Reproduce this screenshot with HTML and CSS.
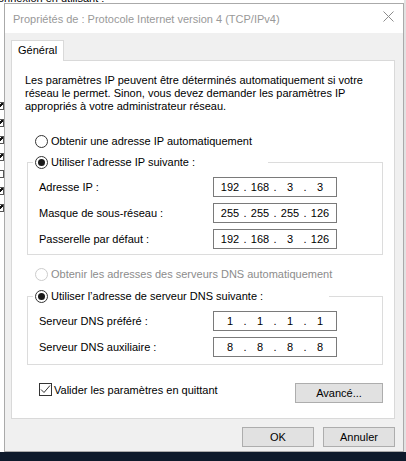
FILE: index.html
```html
<!DOCTYPE html>
<html lang="fr">
<head>
<meta charset="utf-8">
<title>Propriétés IPv4</title>
<link rel="stylesheet" href="styles.css">
</head>
<body>
<div class="desktop">
  <div class="bgwin">
    <div class="bgwin-top">onnexion en utilisant :</div>
    <div class="bgwin-icons">
      <span class="mk"></span><span class="mk"></span><span class="mk"></span><span class="mk"></span><span class="mk empty"></span><span class="mk"></span><span class="mk"></span>
    </div>
  </div>
  <div class="dialog">
    <div class="titlebar">
      <span class="title">Propriétés de : Protocole Internet version 4 (TCP/IPv4)</span>
      <svg class="close" width="11" height="11" viewBox="0 0 11 11"><path d="M0.5 0.5L10.5 10.5M10.5 0.5L0.5 10.5" stroke="#8c8c8c" stroke-width="1" fill="none"/></svg>
    </div>
    <div class="body">
      <div class="tabs"><div class="tab">Général</div></div>
      <div class="panel">
        <p class="intro">Les paramètres IP peuvent être déterminés automatiquement si votre<br>réseau le permet. Sinon, vous devez demander les paramètres IP<br>appropriés à votre administrateur réseau.</p>
        <div class="radio first"><span class="dot"></span><span>Obtenir une adresse IP automatiquement</span></div>
        <div class="group g1">
          <div class="legend l1"><span class="dot on"></span><span>Utiliser l’adresse IP suivante :</span></div>
          <div class="rows">
            <div class="row"><span>Adresse IP :</span><div class="ip"><span>192</span><i>.</i><span>168</span><i>.</i><span>3</span><i>.</i><span>3</span></div></div>
            <div class="row"><span>Masque de sous-réseau :</span><div class="ip"><span>255</span><i>.</i><span>255</span><i>.</i><span>255</span><i>.</i><span>126</span></div></div>
            <div class="row"><span>Passerelle par défaut :</span><div class="ip"><span>192</span><i>.</i><span>168</span><i>.</i><span>3</span><i>.</i><span>126</span></div></div>
          </div>
        </div>
        <div class="radio disabled"><span class="dot"></span><span>Obtenir les adresses des serveurs DNS automatiquement</span></div>
        <div class="group g2">
          <div class="legend l2"><span class="dot on"></span><span>Utiliser l’adresse de serveur DNS suivante :</span></div>
          <div class="rows">
            <div class="row"><span>Serveur DNS préféré :</span><div class="ip"><span>1</span><i>.</i><span>1</span><i>.</i><span>1</span><i>.</i><span>1</span></div></div>
            <div class="row"><span>Serveur DNS auxiliaire :</span><div class="ip"><span>8</span><i>.</i><span>8</span><i>.</i><span>8</span><i>.</i><span>8</span></div></div>
          </div>
        </div>
        <div class="bottomrow">
          <div class="checkrow">
            <span class="check"><svg width="11" height="11" viewBox="0 0 11 11"><path d="M1 5.5L4 8.5L10 1.5" stroke="#333" stroke-width="1" fill="none"/></svg></span>
            <span>Valider les paramètres en quittant</span>
          </div>
          <button class="btn adv">Avancé...</button>
        </div>
      </div>
      <div class="footer">
        <button class="btn">OK</button>
        <button class="btn">Annuler</button>
      </div>
    </div>
  </div>
  <div class="taskbar"></div>
</div>
</body>
</html>
```

FILE: styles.css
```css
* { box-sizing: border-box; }
html, body { margin: 0; padding: 0; }
body {
  width: 406px;
  height: 461px;
  overflow: hidden;
  font-family: "Liberation Sans", Arial, sans-serif;
  font-size: 11px;
  color: #000;
}
.desktop {
  position: relative;
  width: 406px;
  height: 461px;
  background: #e2e2e2;
}
.bgwin {
  position: absolute;
  left: 0;
  top: 0;
  width: 404px;
  height: 452px;
  background: #ffffff;
}
.bgwin-top {
  position: absolute;
  left: -2px;
  top: -8px;
  font-size: 11px;
  color: #000;
}
.bgwin-icons {
  position: absolute;
  left: -3px;
  top: 102px;
  display: flex;
  flex-direction: column;
  gap: 9px;
}
.mk {
  width: 7px;
  height: 8px;
  border: 1px solid #555;
  background: linear-gradient(135deg, #fff 35%, #111 35%, #111 60%, #fff 60%);
}
.mk.empty { background: #fff; }
.taskbar {
  position: absolute;
  left: 0;
  bottom: 0;
  width: 406px;
  height: 9px;
  background: #0e1a2b;
}
.dialog {
  position: absolute;
  left: 4px;
  top: 3px;
  width: 400px;
  height: 449px;
  border: 1px solid #aaaaaa;
  background: #f0f0f0;
  display: flex;
  flex-direction: column;
}
.titlebar {
  height: 29px;
  background: #fff;
  display: flex;
  align-items: center;
  justify-content: space-between;
  padding: 0 9px 0 8px;
}
.title { color: #999; font-size: 11px; }
.close { align-self: flex-start; margin-top: 7px; }
.body {
  flex: 1;
  padding: 7px 8px 0 6px;
  display: flex;
  flex-direction: column;
}
.tabs { display: flex; height: 20px; }
.tab {
  position: relative;
  z-index: 1;
  width: 53px;
  height: 21px;
  background: #fff;
  border: 1px solid #d9d9d9;
  border-bottom: none;
  padding-left: 6px;
  line-height: 19px;
}
.panel {
  height: 359px;
  background: #fff;
  border: 1px solid #d9d9d9;
  padding-bottom: 15px;
  display: flex;
  flex-direction: column;
}
.intro {
  margin: 13px 0 0 13px;
  line-height: 13px;
}
.radio, .legend {
  display: flex;
  align-items: center;
  height: 14px;
  gap: 3px;
}
.radio.first { margin: 21px 0 0 23px; }
.radio.disabled { margin: 12px 0 0 23px; color: #8c8c8c; }
.radio.disabled .dot { border-color: #cccccc; }
.dot {
  width: 13px;
  height: 13px;
  border: 1px solid #333;
  border-radius: 50%;
  background: #fff;
  display: flex;
  flex: none;
}
.dot.on::after {
  content: "";
  width: 7px;
  height: 7px;
  margin: auto;
  border-radius: 50%;
  background: #1a1a1a;
}
.group {
  margin: 14px 11px 0 15px;
  border: 1px solid #dcdcdc;
  padding-bottom: 5px;
}
.g2 { margin-top: 15px; padding-bottom: 7px; }
.legend {
  margin: -8px 0 0 5px;
  padding-left: 2px;
  background: #fff;
}
.l1 { width: 235px; }
.l2 { width: 296px; }
.rows {
  margin: 8px 0 0 11px;
  display: flex;
  flex-direction: column;
  gap: 6px;
}
.row {
  display: grid;
  grid-template-columns: 174px 124px;
  align-items: center;
}
.ip {
  width: 124px;
  height: 20px;
  border: 1px solid #7a7a7a;
  padding: 0 4px;
  display: grid;
  grid-template-columns: 24px 6px 24px 6px 24px 6px 24px;
  align-items: center;
  justify-items: center;
}
.ip i { font-style: normal; }
.bottomrow {
  margin: 18px 11px 0 27px;
  display: flex;
  justify-content: space-between;
  align-items: flex-start;
}
.checkrow {
  display: flex;
  align-items: center;
  gap: 2px;
  height: 13px;
}
.check {
  width: 13px;
  height: 13px;
  border: 1px solid #333;
  background: #fff;
  display: flex;
}
.btn {
  font-family: inherit;
  font-size: 11px;
  color: #000;
  background: #e1e1e1;
  border: 1px solid #adadad;
  height: 20px;
  width: 72px;
  padding: 0;
  margin: 0;
}
.adv { width: 88px; }
.footer {
  margin-top: 8px;
  display: flex;
  justify-content: flex-end;
  gap: 9px;
}
```
